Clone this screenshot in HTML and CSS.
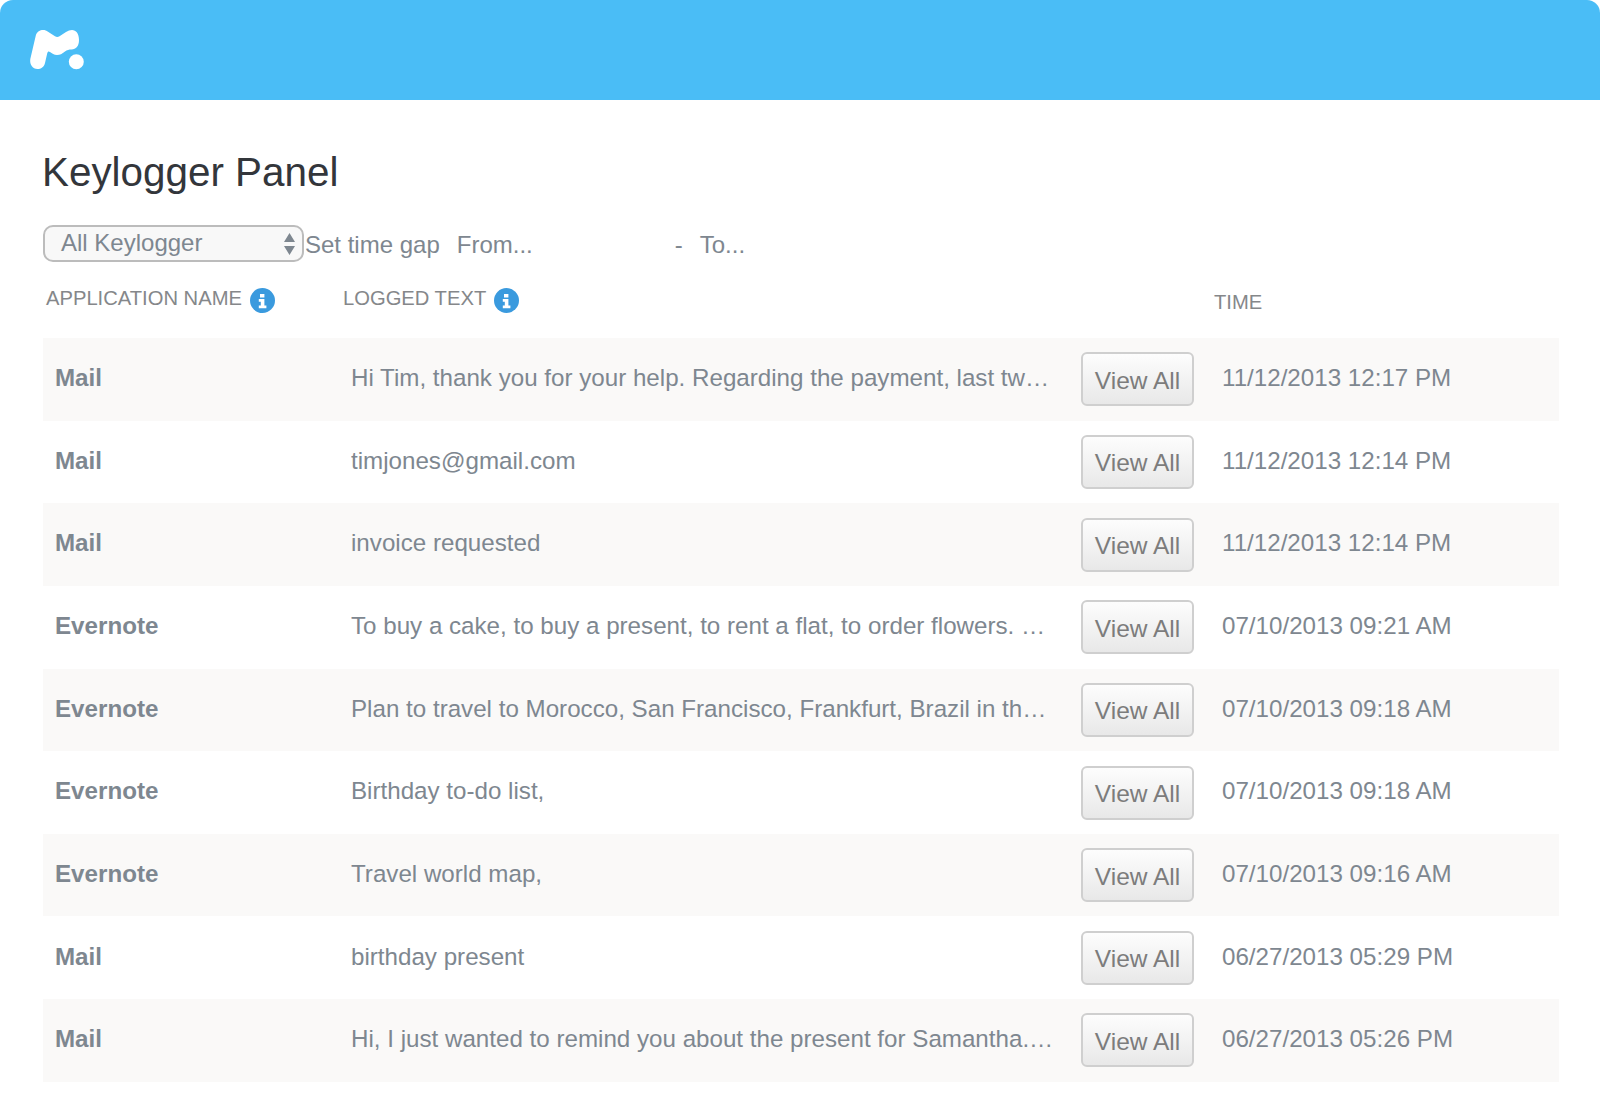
FILE: index.html
```html
<!DOCTYPE html>
<html lang="en">
<head>
<meta charset="utf-8">
<title>Keylogger Panel</title>
<link rel="stylesheet" href="styles.css">
</head>
<body>
<header class="topbar">
  <svg class="logo" width="90" height="100" viewBox="0 0 90 100" aria-label="mSpy">
    <path class="logo-m" d="M30.3 59 L35.8 35.5 C37 31.5 40 30 43 30 C45 30 46.5 30.7 48 31.7 L55 36.3 C56.5 37.3 58 37.3 59.5 36.3 L66 32 C68 30.7 70 30 72 30 C76 30 79 33.5 79 40 C79 46 76 49.5 71.5 49.5 C69 49.5 67 50 65 51.5 C62 54 60 55 57 55 C54 55 52 53.5 50 52 C48.5 51 47.8 51.5 47.3 53 L45 63 C44 67 41 69 37.5 69 C32.5 69 29.5 64.5 30.3 59 Z"/>
    <circle class="logo-dot" cx="76.3" cy="61.7" r="7.5"/>
  </svg>
</header>
<main class="panel">
  <h1 class="title">Keylogger Panel</h1>
  <div class="filters">
    <div class="select">
      <span>All Keylogger</span>
      <svg class="select-arrows" width="13" height="26" viewBox="0 0 13 26"><path d="M6.5 2 L12 11 L1 11 Z M1 15 L12 15 L6.5 24 Z"/></svg>
    </div>
    <span class="gap-label">Set time gap</span>
    <span class="from">From...</span>
    <span class="dash">-</span>
    <span class="to">To...</span>
  </div>
  <div class="table-head">
    <div class="th th-app">APPLICATION NAME <svg class="info" width="25" height="25" viewBox="0 0 25 25"><circle cx="12.5" cy="12.5" r="12.5"/><path d="M10 6h4.4v3.6H10z M8.8 11h5.6v6.4h2v2.8H8.8v-2.8h2v-3.6h-2z"/></svg></div>
    <div class="th th-text">LOGGED TEXT <svg class="info" width="25" height="25" viewBox="0 0 25 25"><circle cx="12.5" cy="12.5" r="12.5"/><path d="M10 6h4.4v3.6H10z M8.8 11h5.6v6.4h2v2.8H8.8v-2.8h2v-3.6h-2z"/></svg></div>
    <div class="th th-time">TIME</div>
  </div>
  <div class="rows">
    <div class="row"><div class="app">Mail</div><div class="text">Hi Tim, thank you for your help. Regarding the payment, last two in</div><button class="view">View All</button><div class="time">11/12/2013 12:17 PM</div></div>
    <div class="row"><div class="app">Mail</div><div class="text">timjones@gmail.com</div><button class="view">View All</button><div class="time">11/12/2013 12:14 PM</div></div>
    <div class="row"><div class="app">Mail</div><div class="text">invoice requested</div><button class="view">View All</button><div class="time">11/12/2013 12:14 PM</div></div>
    <div class="row"><div class="app">Evernote</div><div class="text">To buy a cake, to buy a present, to rent a flat, to order flowers. Wine</div><button class="view">View All</button><div class="time">07/10/2013 09:21 AM</div></div>
    <div class="row"><div class="app">Evernote</div><div class="text">Plan to travel to Morocco, San Francisco, Frankfurt, Brazil in the fall</div><button class="view">View All</button><div class="time">07/10/2013 09:18 AM</div></div>
    <div class="row"><div class="app">Evernote</div><div class="text">Birthday to-do list,</div><button class="view">View All</button><div class="time">07/10/2013 09:18 AM</div></div>
    <div class="row"><div class="app">Evernote</div><div class="text">Travel world map,</div><button class="view">View All</button><div class="time">07/10/2013 09:16 AM</div></div>
    <div class="row"><div class="app">Mail</div><div class="text">birthday present</div><button class="view">View All</button><div class="time">06/27/2013 05:29 PM</div></div>
    <div class="row"><div class="app">Mail</div><div class="text">Hi, I just wanted to remind you about the present for Samantha. Bye</div><button class="view">View All</button><div class="time">06/27/2013 05:26 PM</div></div>
  </div>
</main>
</body>
</html>
```

FILE: styles.css
```css
* { box-sizing: border-box; }
html, body { margin: 0; background: #fff; }
body {
  width: 1600px;
  height: 1100px;
  overflow: hidden;
  font-family: "Liberation Sans", Arial, sans-serif;
  color: #7e8790;
}
.topbar {
  height: 100px;
  background: #4abdf6;
  border-radius: 13px 13px 0 0;
}
.logo { display: block; }
.logo-m, .logo-dot { fill: #fff; }
.panel { padding: 49px 41px 0 43px; }
.title {
  margin: 0 0 0 -1px;
  height: 46px;
  font-size: 40.4px;
  line-height: 46px;
  font-weight: 400;
  color: #33363b;
}
.filters {
  display: flex;
  align-items: center;
  height: 37px;
  margin-top: 30px;
  font-size: 24px;
}
.select {
  display: flex;
  align-items: center;
  justify-content: space-between;
  width: 261px;
  height: 37px;
  padding: 0 6px 2px 16px;
  border: 2px solid #bcbcbc;
  border-radius: 10px;
  background: #f8f8f8;
}
.select-arrows { fill: #7e8790; margin-top: 2px; }
.gap-label { margin: 0 17px 0 1px; padding-top: 3px; }
.from { width: 218px; padding-top: 3px; }
.dash { width: 25px; padding-top: 3px; }
.to { padding-top: 3px; }
.table-head {
  position: relative;
  height: 76px;
  font-size: 20.2px;
  color: #85878a;
}
.th { position: absolute; display: flex; align-items: center; }
.th-app { left: 3px; top: 21px; }
.th-text { left: 300px; top: 21px; }
.th-time { left: 1171px; top: 29px; }
.info { fill: #3a9ade; flex: none; margin-top: 5px; margin-left: 8px; }
.info path { fill: #fff; }
.row {
  display: flex;
  align-items: center;
  height: 82.65px;
  padding-left: 12px;
  font-size: 24.5px;
}
.row:nth-child(odd) { background: #faf9f8; }
.app, .text, .time { padding-bottom: 2.6px; font-size: 24.17px; }
.app { width: 296px; font-weight: 700; }
.text {
  width: 706px;
  white-space: nowrap;
  overflow: hidden;
  text-overflow: ellipsis;
}
.view {
  width: 113px;
  height: 54px;
  margin-left: 24px;
  padding: 3px 0 0;
  border: 2px solid #cfcfcf;
  border-radius: 6px;
  background: linear-gradient(#fdfdfd, #e8e8e8);
  font: inherit;
  color: #7c7c7c;
}
.time { margin-left: 28px; }
```
